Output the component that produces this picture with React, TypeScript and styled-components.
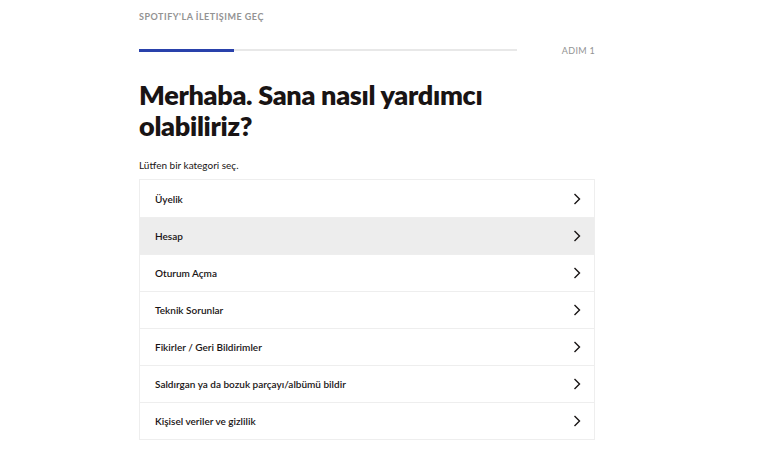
import React from "react";
import styled, { createGlobalStyle } from "styled-components";

const GlobalStyle = createGlobalStyle`
  body {
    margin: 0;
    background: #ffffff;
    font-family: "Lato", "Noto Sans", sans-serif;
    color: #191414;
  }
`;

const categories = [
    { id: 1, label: "Üyelik" },
    { id: 2, label: "Hesap", active: true },
    { id: 3, label: "Oturum Açma" },
    { id: 4, label: "Teknik Sorunlar" },
    { id: 5, label: "Fikirler / Geri Bildirimler" },
    { id: 6, label: "Saldırgan ya da bozuk parçayı/albümü bildir" },
    { id: 7, label: "Kişisel veriler ve gizlilik" },
];

const Chevron = () => (
    <svg width="8" height="12" viewBox="0 0 8 12" fill="none">
        <path d="M1.5 1L6.5 6L1.5 11" stroke="#191414" strokeWidth="1.4" />
    </svg>
);

const App = () => {
    return (
        <Page>
            <GlobalStyle />
            <Content>
                <Eyebrow>Spotify'la İletişime Geç</Eyebrow>
                <ProgressRow>
                    <Track>
                        <Fill style={{ width: `${(1 / 4) * 100}%` }} />
                    </Track>
                    <Step>ADIM 1</Step>
                </ProgressRow>
                <Title>Merhaba. Sana nasıl yardımcı olabiliriz?</Title>
                <Hint>Lütfen bir kategori seç.</Hint>
                <List>
                    {categories.map(({ id, label, active }) => (
                        <Row key={id} $active={active}>
                            <span>{label}</span>
                            <Chevron />
                        </Row>
                    ))}
                </List>
            </Content>
        </Page>
    );
};

const Page = styled.div`
    display: flex;
    justify-content: flex-start;
    padding-left: 139px;
`;

const Content = styled.div`
    width: 456px;
    display: flex;
    flex-direction: column;
    padding-top: 11px;
`;

const Eyebrow = styled.div`
    font-size: 9px;
    font-weight: 700;
    letter-spacing: 0.5px;
    text-transform: uppercase;
    color: #939393;
    line-height: 12px;
`;

const ProgressRow = styled.div`
    display: flex;
    align-items: center;
    margin-top: 21px;
    height: 12px;
`;

const Track = styled.div`
    width: 378px;
    height: 2px;
    background: #e8e8e8;
    position: relative;
`;

const Fill = styled.div`
    position: absolute;
    left: 0;
    top: -0.5px;
    height: 3px;
    background: #2941ab;
`;

const Step = styled.div`
    margin-left: auto;
    font-size: 9px;
    color: #939393;
    letter-spacing: 0.3px;
`;

const Title = styled.h1`
    margin: 23px 0 0;
    font-size: 27px;
    line-height: 31px;
    font-weight: 800;
    color: #191414;
    letter-spacing: -0.3px;
`;

const Hint = styled.p`
    margin: 17px 0 0;
    font-size: 10px;
    line-height: 14px;
    color: #191414;
`;

const List = styled.div`
    margin-top: 7px;
    border: 1px solid #eeeeee;
    display: flex;
    flex-direction: column;
`;

const Row = styled.div<{ $active?: boolean }>`
    height: 37px;
    box-sizing: border-box;
    display: flex;
    align-items: center;
    justify-content: space-between;
    padding: 0 13px 0 15px;
    font-size: 10px;
    font-weight: 600;
    color: #191414;
    background: ${(p) => (p.$active ? "#ededed" : "#ffffff")};
    & + & {
        border-top: 1px solid #eeeeee;
    }
`;

export default App;
